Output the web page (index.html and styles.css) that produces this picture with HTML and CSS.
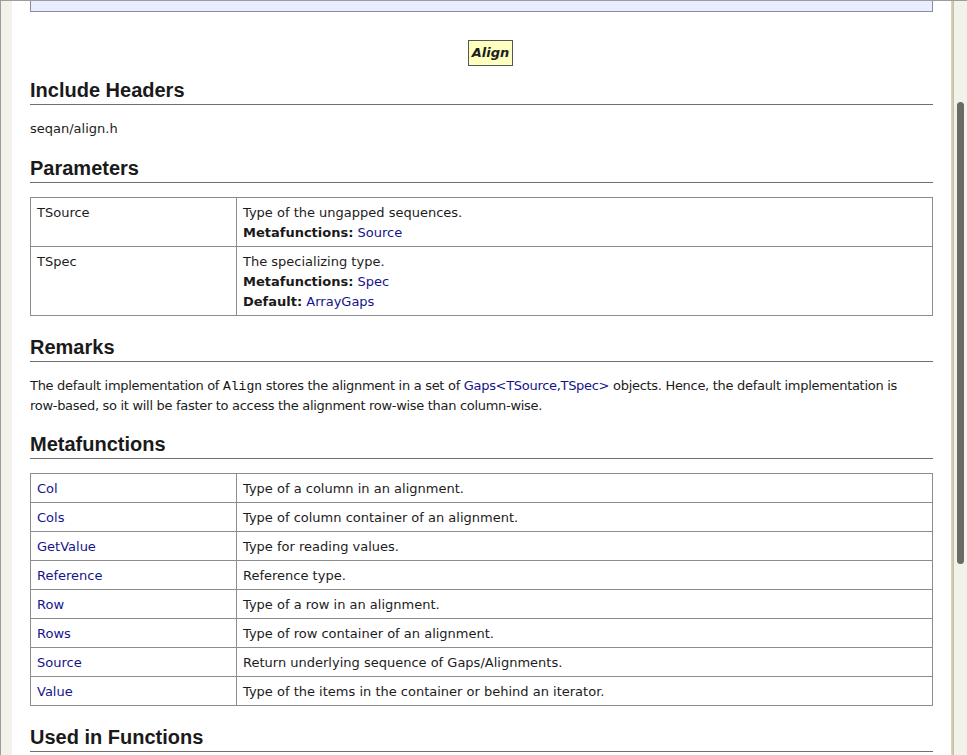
FILE: index.html
```html
<!DOCTYPE html>
<html lang="en">
<head>
<meta charset="utf-8">
<title>Align</title>
<link rel="stylesheet" href="styles.css">
</head>
<body>
<div class="window">
  <div class="gutter-left"></div>
  <main class="page">
    <div class="summary-box"></div>

    <div class="diagram"><span class="class-box">Align</span></div>

    <h2 class="section">Include Headers</h2>
    <p class="text">seqan/align.h</p>

    <h2 class="section">Parameters</h2>
    <table class="doc-table">
      <colgroup><col class="col-name"><col></colgroup>
      <tr>
        <td>TSource</td>
        <td>Type of the ungapped sequences.<br><b>Metafunctions:</b> <a href="#">Source</a></td>
      </tr>
      <tr>
        <td>TSpec</td>
        <td>The specializing type.<br><b>Metafunctions:</b> <a href="#">Spec</a><br><b>Default:</b> <a href="#">ArrayGaps</a></td>
      </tr>
    </table>

    <h2 class="section">Remarks</h2>
    <p class="text remarks">The default implementation of <code class="code">Align</code> stores the alignment in a set of <a href="#">Gaps&lt;TSource,TSpec&gt;</a> objects. Hence, the default implementation is <span class="nowrap">row-based,</span> so it will be faster to access the alignment <span class="nowrap">row-wise</span> than <span class="nowrap">column-wise.</span></p>

    <h2 class="section">Metafunctions</h2>
    <table class="doc-table">
      <colgroup><col class="col-name"><col></colgroup>
      <tr><td><a href="#">Col</a></td><td>Type of a column in an alignment.</td></tr>
      <tr><td><a href="#">Cols</a></td><td>Type of column container of an alignment.</td></tr>
      <tr><td><a href="#">GetValue</a></td><td>Type for reading values.</td></tr>
      <tr><td><a href="#">Reference</a></td><td>Reference type.</td></tr>
      <tr><td><a href="#">Row</a></td><td>Type of a row in an alignment.</td></tr>
      <tr><td><a href="#">Rows</a></td><td>Type of row container of an alignment.</td></tr>
      <tr><td><a href="#">Source</a></td><td>Return underlying sequence of Gaps/Alignments.</td></tr>
      <tr><td><a href="#">Value</a></td><td>Type of the items in the container or behind an iterator.</td></tr>
    </table>

    <h2 class="section">Used in Functions</h2>
  </main>
  <div class="gutter-right">
    <div class="edge"></div>
    <div class="scroll-track"><div class="scroll-thumb"></div></div>
  </div>
</div>
</body>
</html>
```
FILE: styles.css
```css
html, body {
  margin: 0;
  padding: 0;
  height: 100%;
  overflow: hidden;
  background: #ffffff;
}

.window {
  display: flex;
  height: 754px;
  border-top: 1px solid #9c9c9c;
  font-family: "DejaVu Sans", sans-serif;
  font-size: 13px;
  line-height: 20px;
  color: #1c1c1c;
}

.gutter-left {
  width: 11px;
  flex: none;
  border-left: 1px solid #9c9c9c;
  background: #f2f1ea;
}

.page {
  flex: 1;
  min-width: 0;
  padding: 0 18px;
  background: #ffffff;
  overflow: hidden;
}

.summary-box {
  height: 10px;
  border: 1px solid #8a8c98;
  border-top: none;
  background: #e8eeff;
}

.diagram {
  padding: 28px 0 0 18px;
  text-align: center;
  line-height: 0;
}

.class-box {
  display: inline-block;
  padding: 2px 3px;
  border: 1px solid #555555;
  background: #ffffc0;
  font-weight: bold;
  font-style: italic;
  font-size: 13px;
  line-height: 20px;
  color: #1e1e1e;
}

.section {
  margin: 17px 0 14px;
  padding-bottom: 2px;
  border-bottom: 1px solid #707070;
  font-family: "Liberation Sans", sans-serif;
  font-size: 20px;
  line-height: 24px;
  font-weight: bold;
  color: #1a1a1a;
}

.diagram + .section {
  margin-top: 12px;
}

.doc-table + .section {
  margin-top: 19px;
}

.text {
  margin: 0;
}

.remarks {
  line-height: 19px;
  letter-spacing: -0.3px;
  margin-bottom: 1px;
}

.nowrap {
  white-space: nowrap;
}

.code {
  font-family: "Liberation Mono", monospace;
  font-size: 13px;
  letter-spacing: 0;
  color: #111111;
}

a {
  color: #14148c;
  text-decoration: none;
}

b {
  color: #1a1a1a;
}

.doc-table {
  width: 100%;
  border-collapse: collapse;
  table-layout: fixed;
}

.col-name {
  width: 206px;
}

.doc-table td {
  border: 1px solid #8c8c8c;
  padding: 5px 6px 3px;
  vertical-align: top;
}

.gutter-right {
  display: flex;
  flex: none;
  width: 16px;
  background: #f2f1ea;
}

.edge {
  width: 3px;
  background: linear-gradient(to right, #dcd8c4, #c2bd9e);
}

.scroll-track {
  flex: 1;
  padding: 101px 3px 0 3px;
}

.scroll-thumb {
  width: 7px;
  height: 462px;
  border-radius: 4px;
  background: #6b6b66;
}
```
